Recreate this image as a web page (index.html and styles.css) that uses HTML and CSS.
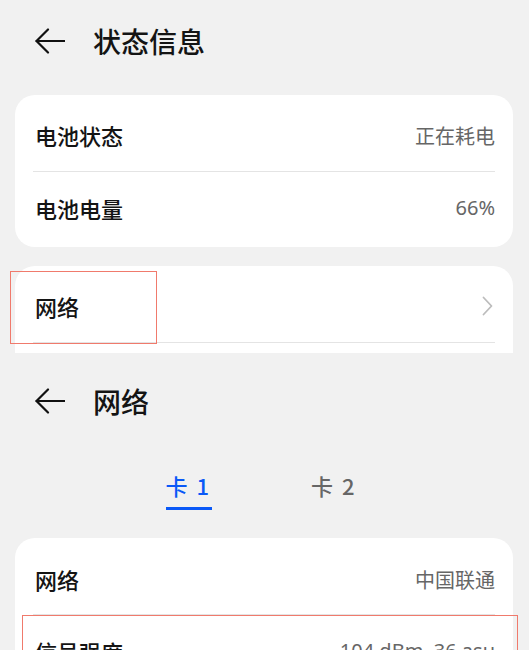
FILE: index.html
```html
<!DOCTYPE html>
<html lang="zh-CN">
<head>
    <meta charset="UTF-8">
    <meta name="viewport" content="width=device-width, initial-scale=1.0">
    <title>状态信息</title>
    <link rel="stylesheet" href="styles.css">
</head>
<body>

    <!-- 第一张截图：状态信息 -->
    <div class="screen screen-top">
        <div class="header">
            <svg class="back-icon" width="30" height="26" viewBox="0 0 30 26">
                <polyline points="13,1.5 1.5,13 13,24.5" fill="none" stroke="#111" stroke-width="2.2" stroke-linecap="round" stroke-linejoin="round"/>
                <line x1="1.5" y1="13" x2="29.5" y2="13" stroke="#111" stroke-width="2.2" stroke-linecap="round"/>
            </svg>
            <div class="header-title">状态信息</div>
        </div>

        <div class="card">
            <div class="row">
                <span class="row-label">电池状态</span>
                <span class="row-value">正在耗电</span>
            </div>
            <div class="row">
                <span class="row-label">电池电量</span>
                <span class="row-value num">66%</span>
            </div>
        </div>

        <div class="card card-gap">
            <div class="mark mark-net"></div>
            <div class="row">
                <span class="row-label">网络</span>
                <svg class="chevron" width="11" height="20" viewBox="0 0 11 20">
                    <polyline points="1.5,1.5 9.5,10 1.5,18.5" fill="none" stroke="#bcbcbc" stroke-width="1.8" stroke-linecap="round" stroke-linejoin="round"/>
                </svg>
            </div>
            <div class="row"></div>
        </div>
    </div>

    <!-- 第二张截图：网络 -->
    <div class="screen screen-bottom">
        <div class="header header-tall">
            <svg class="back-icon" width="30" height="26" viewBox="0 0 30 26">
                <polyline points="13,1.5 1.5,13 13,24.5" fill="none" stroke="#111" stroke-width="2.2" stroke-linecap="round" stroke-linejoin="round"/>
                <line x1="1.5" y1="13" x2="29.5" y2="13" stroke="#111" stroke-width="2.2" stroke-linecap="round"/>
            </svg>
            <div class="header-title">网络</div>
        </div>

        <div class="tabs">
            <div class="tab active">卡 1</div>
            <div class="tab">卡 2</div>
        </div>

        <div class="card card-sim">
            <div class="mark mark-signal"></div>
            <div class="row row-first">
                <span class="row-label">网络</span>
                <span class="row-value">中国联通</span>
            </div>
            <div class="row">
                <span class="row-label">信号强度</span>
                <span class="row-value num">-104 dBm  36 asu</span>
            </div>
        </div>
    </div>

</body>
</html>
```

FILE: styles.css
```css
* {
    margin: 0;
    padding: 0;
    box-sizing: border-box;
}

html, body {
    width: 529px;
    height: 650px;
    overflow: hidden;
    background-color: #f1f1f1;
    font-family: "Noto Sans CJK SC", "Noto Sans", sans-serif;
    color: #141414;
}

.screen {
    overflow: hidden;
}

.screen-top {
    height: 353px;
}

.screen-bottom {
    height: 297px;
}

/* 顶部标题栏 */
.header {
    height: 82px;
    display: flex;
    align-items: center;
    padding-left: 35px;
}

.header-tall {
    height: 96px;
}

.back-icon {
    flex-shrink: 0;
}

.header-title {
    margin-left: 28px;
    font-size: 28px;
    font-weight: 500;
    line-height: 1;
}

/* 卡片 */
.card {
    position: relative;
    margin: 13px 16px 0 15px;
    padding: 4px 18px;
    background-color: #fff;
    border-radius: 20px;
}

.card-gap {
    margin-top: 19px;
}

.row {
    height: 72px;
    display: flex;
    align-items: center;
    justify-content: space-between;
    padding-left: 2px;
}

.row + .row {
    border-top: 1px solid #e4e4e4;
}

.row-label {
    font-size: 22px;
    font-weight: 500;
}

.row-value {
    font-size: 20px;
    color: #666;
}

.row-value.num {
    font-family: "Noto Sans", sans-serif;
    white-space: pre;
}

.chevron {
    margin-right: 2px;
}

/* 标注框 */
.mark {
    position: absolute;
    border: 1px solid #f07a6c;
    pointer-events: none;
    z-index: 1;
}

.mark-net {
    left: -5px;
    top: 5px;
    width: 147px;
    height: 73px;
}

.mark-signal {
    left: 7px;
    top: 77px;
    width: 496px;
    height: 120px;
}

/* 卡 1 / 卡 2 */
.tabs {
    display: flex;
    justify-content: center;
    gap: 99px;
    margin-top: 22px;
    padding-right: 6px;
}

.tab {
    font-size: 22px;
    font-weight: 500;
    line-height: 28px;
    word-spacing: 4px;
    color: #666;
    padding: 0 3px 8px 0;
    border-bottom: 3px solid transparent;
}

.tab.active {
    color: #0a59f7;
    border-bottom-color: #0a59f7;
}

.card-sim {
    margin-top: 28px;
    padding-top: 6px;
}

.row-first {
    height: 70px;
}
```
